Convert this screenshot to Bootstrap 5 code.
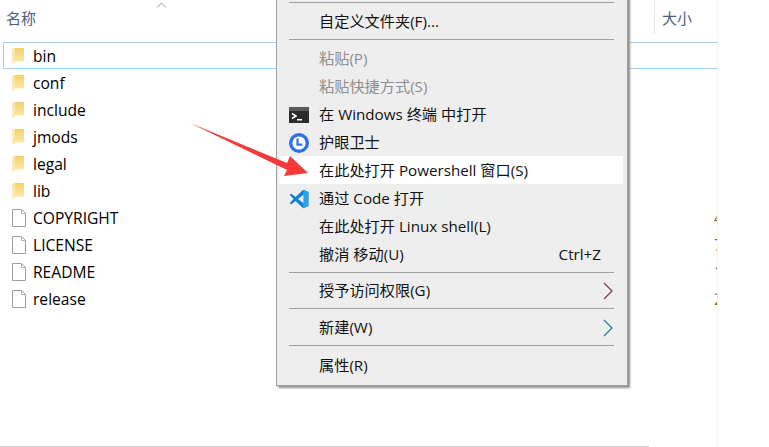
<!DOCTYPE html>
<html lang="zh-CN">
<head>
  <meta charset="UTF-8">
  <meta name="viewport" content="width=device-width, initial-scale=1.0">
  <title>文件夹右键菜单</title>
  <link href="https://cdn.jsdelivr.net/npm/bootstrap@5.3.2/dist/css/bootstrap.min.css" rel="stylesheet">
  <script src="https://cdn.jsdelivr.net/npm/bootstrap@5.3.2/dist/js/bootstrap.bundle.min.js" defer></script>
  <style>
    html, body { height: 447px; overflow: hidden; }
    body {
      position: relative;
      background: #fff;
      color: #111;
      font-family: "Open Sans", "Noto Sans CJK SC", sans-serif;
      font-size: 15px;
      line-height: 20px;
    }
    .explorer { width: 718px; height: 447px; border-right: 1px solid #f0f0f0; }
    .head-row { height: 42px; position: relative; color: #4c607a; padding-left: 6px; padding-top: 8px; }
    .head-size { position: absolute; left: 654px; top: 2px; height: 32px; border-left: 1px solid #e5e5e5; padding: 6px 0 0 7px; }
    .sort-mark { position: absolute; left: 156px; top: 2px; }
    .file-row { height: 27px; margin-left: 3px; padding-left: 8px; padding-top: 1px; border: 1px solid transparent; border-right: 0; gap: 9px; color: #000; font-size: 15.6px; }
    .file-row.doc { gap: 7px; }
    .file-row.picked { border-color: #99d1ff; }
    .size-clip { position: absolute; left: 714px; width: 3px; overflow: hidden; color: #8a6a40; }
    .hscroll { position: absolute; left: 0; bottom: 0; width: 649px; height: 1px; background: #cdcdcd; }
    .ctx-menu {
      position: absolute;
      left: 276px;
      top: -4px;
      width: 352px;
      height: 390px;
      background: #eeeeee;
      border: 1px solid #a0a0a0;
      box-shadow: 2px 2px 2px #8f8f8f;
      padding: 5px 2px 0;
      z-index: 2;
      font-size: 15.2px;
    }
    .ctx-item { height: 28px; padding: 0 24px 2px 40px; position: relative; }
    .ctx-item.hot { background: #fff; margin-right: 2px; margin-top: -1px; margin-bottom: 1px; padding-bottom: 0; }
    .ctx-item.off { color: #8f8f8f; }
    .ctx-item.last { padding-bottom: 0; }
    .ctx-line { height: 1px; background: #a0a0a0; margin: 3px 11px 5px 10px; }
    .ctx-line.tight { margin-top: 0; }
    .ctx-line.snug { margin-bottom: 4px; }
    .ctx-icon { position: absolute; left: 10px; top: 4px; }
    .ctx-more { position: absolute; right: 12px; top: 5px; }
    .red-arrow { position: absolute; left: 0; top: 0; z-index: 3; }
  </style>
</head>
<body>
  <div class="explorer">
    <div class="head-row">
      名称
      <svg class="sort-mark" width="11" height="6" viewBox="0 0 11 6"><path d="M1 5.500 5.500 1 10 5.500" fill="none" stroke="#9a9a9a"/></svg>
      <div class="head-size">大小</div>
    </div>
    <div id="file-list"></div>
  </div>
  <div class="hscroll"></div>

  <div class="ctx-menu">
    <div class="ctx-line tight"></div>
    <div class="ctx-item d-flex align-items-center">自定义文件夹(F)...</div>
    <div class="ctx-line"></div>
    <div class="ctx-item off d-flex align-items-center">粘贴(P)</div>
    <div class="ctx-item off d-flex align-items-center">粘贴快捷方式(S)</div>
    <div class="ctx-item d-flex align-items-center">
      <svg class="ctx-icon" width="20" height="20" viewBox="0 0 20 20">
        <rect y="2" width="20" height="16" fill="#2b2b2b"/>
        <rect y="2" width="20" height="4" fill="#5a5a5a"/>
        <path d="M3 8.500 7 11 3 13.500" fill="none" stroke="#fff" stroke-width="1.500"/>
        <rect x="8" y="14" width="5" height="1.500" fill="#fff"/>
      </svg>
      在 Windows 终端 中打开
    </div>
    <div class="ctx-item d-flex align-items-center">
      <svg class="ctx-icon" width="20" height="20" viewBox="0 0 20 20">
        <circle cx="10" cy="10" r="10" fill="#2f6fed"/>
        <circle cx="10" cy="10" r="6.600" fill="#fff"/>
        <path d="M8.500 5.500v6.200h4.800" fill="none" stroke="#2f6fed" stroke-width="2.200"/>
      </svg>
      护眼卫士
    </div>
    <div class="ctx-item hot d-flex align-items-center">在此处打开 Powershell 窗口(S)</div>
    <div class="ctx-item d-flex align-items-center">
      <svg class="ctx-icon" width="20" height="20" viewBox="0 0 20 20">
        <path d="M14.200.8 19.400 3v14l-5.200 2.200L6.600 12 2.400 15.200.6 14.200 4.600 10 .6 5.800 2.400 4.800 6.600 8z" fill="#0f7fcf"/>
        <path d="M14.200.8 19.400 3v14l-5.200 2.200z" fill="#2aa3ee"/>
        <path d="M14.400 5.800 9 10l5.400 4.200z" fill="#eeeeee"/>
      </svg>
      通过 Code 打开
    </div>
    <div class="ctx-item d-flex align-items-center">在此处打开 Linux shell(L)</div>
    <div class="ctx-item d-flex align-items-center justify-content-between">
      <span>撤消 移动(U)</span><span>Ctrl+Z</span>
    </div>
    <div class="ctx-line snug"></div>
    <div class="ctx-item d-flex align-items-center">
      授予访问权限(G)
      <svg class="ctx-more" width="10" height="18" viewBox="0 0 10 18"><path d="M1 1 9 9 1 17" fill="none" stroke="#7b3a42" stroke-width="1.200"/></svg>
    </div>
    <div class="ctx-line"></div>
    <div class="ctx-item d-flex align-items-center">
      新建(W)
      <svg class="ctx-more" width="10" height="18" viewBox="0 0 10 18"><path d="M1 1 9 9 1 17" fill="none" stroke="#1f7f8e" stroke-width="1.200"/></svg>
    </div>
    <div class="ctx-line"></div>
    <div class="ctx-item last d-flex align-items-center">属性(R)</div>
  </div>

  <svg class="red-arrow" width="320" height="190" viewBox="0 0 320 190">
    <path d="M190 123 287 163 290 156 308 173 284 176 287 170z" fill="#f43a3a"/>
  </svg>

  <script>
    const files = [
      { name: 'bin', type: 'folder', picked: true },
      { name: 'conf', type: 'folder' },
      { name: 'include', type: 'folder' },
      { name: 'jmods', type: 'folder' },
      { name: 'legal', type: 'folder' },
      { name: 'lib', type: 'folder' },
      { name: 'COPYRIGHT', type: 'file', size: '4' },
      { name: 'LICENSE', type: 'file', size: '7' },
      { name: 'README', type: 'file', size: '1' },
      { name: 'release', type: 'file', size: '2' }
    ];

    const folderIcon = `<svg width="12" height="18" viewBox="0 0 12 18">
      <defs><linearGradient id="fold" x1="0" y1="0" x2="0" y2="1"><stop offset="0" stop-color="#f3cf6c"/><stop offset="1" stop-color="#fde9a6"/></linearGradient></defs>
      <path d="M2 1h10v13.500H2z" fill="url(#fold)"/>
      <path d="M0 2 3 1v14.500L.500 17z" fill="#fbe6a8"/></svg>`;
    const fileIcon = `<svg width="14" height="18" viewBox="0 0 14 18">
      <path d="M.5.5h9l4 4v13H.5z" fill="#fff" stroke="#9c9c9c"/>
      <path d="M9.500.5v4h4" fill="none" stroke="#b5b5b5"/></svg>`;

    // 文件列表
    const list = document.getElementById('file-list');
    files.forEach(f => {
      const row = document.createElement('div');
      row.className = 'file-row d-flex align-items-center' + (f.picked ? ' picked' : '') + (f.type === 'file' ? ' doc' : '');
      row.innerHTML = (f.type === 'folder' ? folderIcon : fileIcon) + `<span>${f.name}</span>`
        + (f.size ? `<span class="size-clip">${f.size}</span>` : '');
      list.appendChild(row);
    });
  </script>
</body>
</html>
